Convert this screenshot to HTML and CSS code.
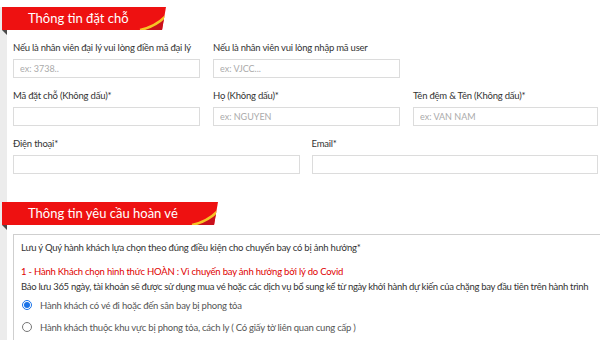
FILE: index.html
```html
<!DOCTYPE html>
<html>
  <head>
    <link rel="stylesheet" href="styles.css">
  </head>
  <body>
    <div class="page">
      <div class="section-head">
        <div class="ribbon ribbon-short">
          <span>Thông tin đặt chỗ</span>
          <svg class="ribbon-curve" width="30" height="23" viewBox="0 0 30 23">
            <path d="M4 23 Q19 20 30 9 L30 23 Z" fill="#c9101c" />
            <path d="M4 23 Q19 20 30 9" fill="none" stroke="#f6c325" stroke-width="2.5" />
          </svg>
        </div>
      </div>

      <div class="form">
        <div class="row row-3">
          <div class="field">
            <label>Nếu là nhân viên đại lý vui lòng điền mã đại lý</label>
            <input type="text" placeholder="ex: 3738..">
          </div>
          <div class="field">
            <label>Nếu là nhân viên vui lòng nhập mã user</label>
            <input type="text" placeholder="ex: VJCC...">
          </div>
        </div>

        <div class="row row-3">
          <div class="field">
            <label>Mã đặt chỗ (Không dấu)*</label>
            <input type="text">
          </div>
          <div class="field">
            <label>Họ (Không dấu)*</label>
            <input type="text" placeholder="ex: NGUYEN">
          </div>
          <div class="field">
            <label>Tên đệm &amp; Tên (Không dấu)*</label>
            <input type="text" placeholder="ex: VAN NAM">
          </div>
        </div>

        <div class="row row-2">
          <div class="field">
            <label>Điện thoại*</label>
            <input type="text">
          </div>
          <div class="field">
            <label>Email*</label>
            <input type="text">
          </div>
        </div>
      </div>

      <div class="section-head section-head-2">
        <div class="ribbon ribbon-long">
          <span>Thông tin yêu cầu hoàn vé</span>
          <svg class="ribbon-curve" width="30" height="23" viewBox="0 0 30 23">
            <path d="M4 23 Q19 20 30 9 L30 23 Z" fill="#c9101c" />
            <path d="M4 23 Q19 20 30 9" fill="none" stroke="#f6c325" stroke-width="2.5" />
          </svg>
        </div>
      </div>

      <div class="refund-box">
        <p class="note">Lưu ý Quý hành khách lựa chọn theo đúng điều kiện cho chuyến bay có bị ảnh hưởng*</p>
        <p class="option-title">1 - Hành Khách chọn hình thức HOÀN : Vì chuyến bay ảnh hưởng bởi lý do Covid</p>
        <p class="option-desc">Bảo lưu 365 ngày, tài khoản sẽ được sử dụng mua vé hoặc các dịch vụ bổ sung kể từ ngày khởi hành dự kiến của chặng bay đầu tiên trên hành trình</p>
        <label class="radio">
          <input type="radio" name="reason" checked>
          <span>Hành khách có vé đi hoặc đến sân bay bị phong tỏa</span>
        </label>
        <label class="radio">
          <input type="radio" name="reason">
          <span>Hành khách thuộc khu vực bị phong tỏa, cách ly ( Có giấy tờ liên quan cung cấp )</span>
        </label>
      </div>
    </div>
  </body>
</html>
```

FILE: styles.css
```css
body {
  margin: 0;
  padding: 7px 0 0 0;
  background-color: #fff;
  font-family: "Lato", "Liberation Sans", sans-serif;
  font-size: 9.5px;
  letter-spacing: -0.22px;
  color: #333;
  overflow: hidden;
}

.page {
  border-left: 7px solid #ececec;
  min-height: 400px;
}

/* red section title */
.section-head {
  position: relative;
  margin-left: -5px;
}

.section-head::after {
  content: "";
  position: absolute;
  left: 0;
  top: 23px;
  width: 0;
  height: 0;
  border-top: 5px solid #4a4a4a;
  border-left: 5px solid transparent;
}

.section-head-2 {
  margin-top: 28px;
}

.ribbon {
  position: relative;
  height: 23px;
  background-color: #ee1111;
  clip-path: polygon(0 0, 100% 0, calc(100% - 4px) 100%, 0 100%);
}

.ribbon span {
  display: block;
  padding-left: 26px;
  line-height: 23px;
  font-size: 13px;
  letter-spacing: 0;
  color: #fff;
}

.ribbon-curve {
  position: absolute;
  right: 0;
  bottom: 0;
}

.ribbon-short {
  width: 164px;
}

.ribbon-long {
  width: 216px;
}

.form {
  padding: 11px 2px 0 6px;
}

.row {
  display: grid;
  column-gap: 13px;
  margin-bottom: 11px;
}

.row-3 {
  grid-template-columns: 187px 187px 1fr;
}

.row-2 {
  grid-template-columns: 1fr 1fr;
  column-gap: 12px;
  margin-bottom: 0;
}

.field label {
  display: block;
  line-height: 14px;
  margin-bottom: 4px;
}

.field input {
  display: block;
  box-sizing: border-box;
  width: 100%;
  height: 19px;
  border: 1px solid #dcdcdc;
  padding: 0 6px;
  font-family: inherit;
  font-size: 9px;
  color: #333;
}

.field input::placeholder {
  color: #aaa;
}

.refund-box {
  margin: 9px 0 0 6px;
  border: 1px solid #cfcfcf;
  border-right: none;
  padding: 5px 4px 5px 7px;
}

.refund-box p {
  margin: 0;
  line-height: 15px;
}

.note {
  margin-bottom: 9px !important;
}

.option-title {
  color: #e00000;
}

.option-desc {
  white-space: nowrap;
  letter-spacing: -0.3px;
}

.radio {
  display: flex;
  align-items: center;
  height: 22px;
  color: #555;
}

.radio input {
  margin: 0 8px 0 1px;
  width: 10px;
  height: 10px;
  accent-color: #1a73e8;
}
```
